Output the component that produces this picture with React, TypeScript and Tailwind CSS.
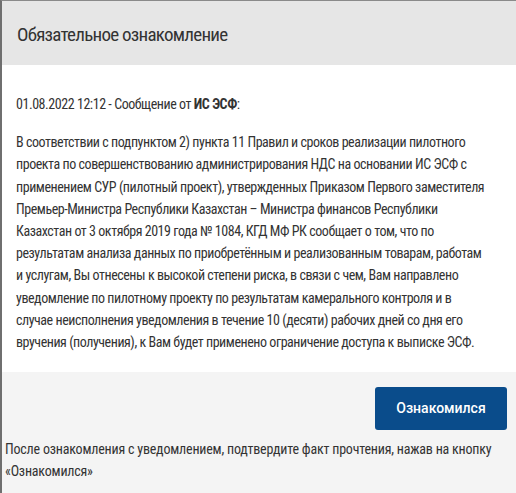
const paragraph = [
  "В соответствии с подпунктом 2) пункта 11 Правил и сроков реализации пилотного",
  "проекта по совершенствованию администрирования НДС на основании ИС ЭСФ с",
  "применением СУР (пилотный проект), утвержденных Приказом Первого заместителя",
  "Премьер-Министра Республики Казахстан – Министра финансов Республики",
  "Казахстан от 3 октября 2019 года № 1084, КГД МФ РК сообщает о том, что по",
  "результатам анализа данных по приобретённым и реализованным товарам, работам",
  "и услугам, Вы отнесены к высокой степени риска, в связи с чем, Вам направлено",
  "уведомление по пилотному проекту по результатам камерального контроля и в",
  "случае неисполнения уведомления в течение 10 (десяти) рабочих дней со дня его",
  "вручения (получения), к Вам будет применено ограничение доступа к выписке ЭСФ.",
];

export default function App() {
  return (
    <div className="h-[493px] w-[516px] overflow-hidden bg-white font-['Roboto_Condensed',sans-serif] text-[#333]">
      <div className="flex h-full flex-col border-l-2 border-t border-l-[#6f6f6f] border-t-[#8a8a8a]">
        {/* Header */}
        <div className="flex h-[64px] items-center bg-[#e6e6e6] px-[15px] pt-[3px]">
          <h1 className="text-[19px] leading-none tracking-[-0.75px] text-[#333]">Обязательное ознакомление</h1>
        </div>

        {/* Body */}
        <div className="h-[307px] bg-white px-[14px] pt-[28px] text-[14px] leading-[22.2px] tracking-[-0.45px]">
          <p className="mb-[16px]">
            01.08.2022 12:12 - Сообщение от <b className="font-bold">ИС ЭСФ</b>:
          </p>
          <p>
            {paragraph.map((line, i) => (
              <span key={i} className="block whitespace-nowrap">
                {line}
              </span>
            ))}
          </p>
        </div>

        {/* Footer */}
        <div className="flex flex-1 flex-col bg-[#f4f4f4] px-[3px] pt-[15px]">
          <div className="flex justify-end pr-[6px]">
            <button className="h-[43px] w-[132px] rounded-[3px] bg-[#0a4c8b] font-['Roboto',sans-serif] text-[14px] font-medium text-white">
              Ознакомился
            </button>
          </div>
          <p className="mt-[8px] text-[14px] leading-[22.2px] tracking-[-0.2px]">
            После ознакомления с уведомлением, подтвердите факт прочтения, нажав на кнопку
            <br />
            «Ознакомился»
          </p>
        </div>
      </div>
    </div>
  );
}
